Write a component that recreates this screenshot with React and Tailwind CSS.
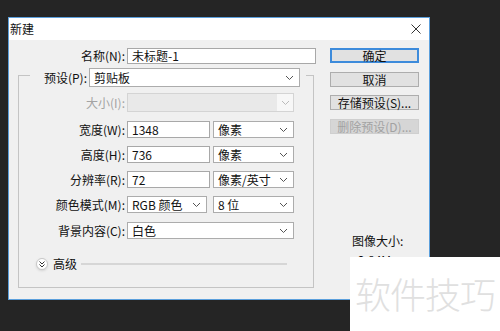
import React from 'react';

const FONT = { fontFamily: '"Noto Sans CJK SC", "Noto Sans", sans-serif' };

const Chevron = ({ color = '#555' }) => (
  <svg width="9" height="6" viewBox="0 0 9 6" className="shrink-0">
    <polyline points="1,1 4.5,4.5 8,1" fill="none" stroke={color} strokeWidth="1" />
  </svg>
);

const Select = ({ value, w, h = 'h-[17px]', disabled }) => (
  <div
    className={`${w} ${h} flex items-center justify-between border pl-[4px] pr-[5px] ${
      disabled ? 'border-[#d4d4d4] bg-[#e9e9e9]' : 'border-[#acacac] bg-white'
    }`}
  >
    <span className="text-[12px] leading-none text-[#111]">{value}</span>
    {disabled ? (
      <div className="h-full w-[16px] -mr-[5px] flex items-center justify-center bg-[#f7f7f7]">
        <Chevron color="#bbb" />
      </div>
    ) : (
      <Chevron />
    )}
  </div>
);

const Input = ({ value, w }) => (
  <div className={`${w} h-[17px] flex items-center border border-[#a8a8a8] bg-white pl-[4px]`}>
    <span className="text-[12px] leading-none text-[#111]">{value}</span>
  </div>
);

const Row = ({ label, children, className = '', dim }) => (
  <div className={`flex items-center ${className}`}>
    <div className={`w-[106px] text-right text-[12px] leading-none ${dim ? 'text-[#a3a3a3]' : 'text-[#111]'}`}>
      {label}
    </div>
    <div className="ml-[2px] flex gap-[3px]">{children}</div>
  </div>
);

const Button = ({ children, primary, disabled, className = '' }) => (
  <div
    className={`w-[89px] h-[15px] flex items-center justify-center text-[12px] leading-none ${
      primary
        ? 'border-2 border-[#3d8bdb] bg-[#e1e1e1] text-[#111]'
        : disabled
        ? 'border border-[#cfcfcf] bg-[#d6d6d6] text-[#a2a2a2]'
        : 'border border-[#adadad] bg-[#e1e1e1] text-[#111]'
    } ${className}`}
  >
    {children}
  </div>
);

const App = () => {
  return (
    <div className="relative w-[500px] h-[331px] overflow-hidden bg-[#252525] pt-[17px] pl-[8px]" style={FONT}>
      <div className="w-[422px] h-[283px] border border-[#5b9fdc] bg-[#f0f0f0] flex flex-col">
        {/* title bar */}
        <div className="h-[22px] bg-white flex items-center justify-between pl-[1px] pr-[8px]">
          <span className="text-[12px] leading-none text-[#111]">新建</span>
          <svg width="10" height="10" viewBox="0 0 10 10">
            <path d="M0.5 0.5L9.5 9.5M9.5 0.5L0.5 9.5" stroke="#333" strokeWidth="1" />
          </svg>
        </div>

        <div className="flex">
          {/* form */}
          <div className="w-[307px] flex flex-col">
            <div className="mt-[8px] flex items-center">
              <div className="w-[116px] text-right text-[12px] leading-none text-[#111]">名称(N):</div>
              <div className="ml-[2px] w-[189px] h-[16px] flex items-center border border-[#a8a8a8] bg-white pl-[4px]">
                <span className="text-[12px] leading-none text-[#111]">未标题-1</span>
              </div>
            </div>

            <div className="mt-[11px] ml-[9px] w-[296px] h-[213px] border border-[#c4c4c4] flex flex-col">
              <div className="-mt-[8px] ml-[11px] w-[276px] h-[19px] pr-[6px] bg-[#f0f0f0] flex items-center">
                <div className="flex-1 text-right text-[12px] leading-none text-[#111] pr-[2px]">预设(P):</div>
                <Select value="剪贴板" w="w-[211px]" h="h-[19px]" />
              </div>

              <Row label="大小(I):" dim className="mt-[6px]">
                <Select value="" w="w-[167px]" h="h-[19px]" disabled />
              </Row>
              <Row label="宽度(W):" className="mt-[9px]">
                <Input value="1348" w="w-[83px]" />
                <Select value="像素" w="w-[81px]" />
              </Row>
              <Row label="高度(H):" className="mt-[8px]">
                <Input value="736" w="w-[83px]" />
                <Select value="像素" w="w-[81px]" />
              </Row>
              <Row label="分辨率(R):" className="mt-[8px]">
                <Input value="72" w="w-[83px]" />
                <Select value="像素/英寸" w="w-[81px]" />
              </Row>
              <Row label="颜色模式(M):" className="mt-[8px]">
                <Select value="RGB 颜色" w="w-[80px]" />
                <div className="ml-[3px]">
                  <Select value="8 位" w="w-[81px]" />
                </div>
              </Row>
              <Row label="背景内容(C):" className="mt-[9px]">
                <Select value="白色" w="w-[167px]" />
              </Row>

              <div className="mt-[19px] ml-[17px] flex items-center">
                <div className="w-[12px] h-[12px] rounded-full border border-[#c8c8c8] bg-white shadow-sm flex items-center justify-center">
                  <svg width="6" height="7" viewBox="0 0 6 7">
                    <polyline points="0.5,0.5 3,3 5.5,0.5" fill="none" stroke="#333" strokeWidth="1" />
                    <polyline points="0.5,3.5 3,6 5.5,3.5" fill="none" stroke="#333" strokeWidth="1" />
                  </svg>
                </div>
                <span className="ml-[5px] text-[12px] leading-none text-[#111]">高级</span>
                <div className="ml-[4px] w-[206px] h-[2px] bg-[#d6d6d6]" />
              </div>
            </div>
          </div>

          {/* buttons */}
          <div className="ml-[14px] w-[89px] flex flex-col">
            <Button primary className="mt-[8px]">确定</Button>
            <Button className="mt-[9px]">取消</Button>
            <Button className="mt-[8px]">存储预设(S)...</Button>
            <Button disabled className="mt-[9px]">删除预设(D)...</Button>
            <div className="mt-[100px] pl-[22px] text-[12px] leading-[14px] text-[#111]">图像大小:</div>
            <div className="mt-[5px] pl-[28px] text-[12px] leading-[14px] text-[#111]">2.84M</div>
          </div>
        </div>
      </div>

      {/* watermark */}
      <div className="absolute left-[350px] top-[257px] w-[150px] h-[74px] bg-white flex items-center justify-center pb-[2px]">
        <span className="text-[36px] font-light leading-none text-[#e0e0e0] tracking-[-1px]">软件技巧</span>
      </div>
    </div>
  );
};

export default App;
